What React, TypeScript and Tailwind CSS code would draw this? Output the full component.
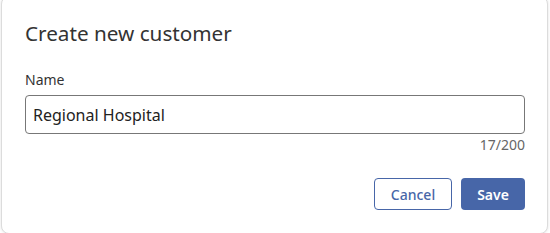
import { useState } from "react";

export default function App() {
  const [name, setName] = useState("Regional Hospital");

  return (
    <div className="w-[550px] h-[233px] bg-white overflow-hidden" style={{ fontFamily: '"Noto Sans", sans-serif' }}>
      <div className="ml-[1px] mr-[2px] -mt-[4px] h-[238px] rounded-lg bg-white border border-[#dcdcdc] shadow-[0_0_3px_rgba(0,0,0,0.12)] pl-[23px] pr-[22px] pt-[22px]">
        <h2 className="text-[20.7px] leading-[28px] text-[#333333]">Create new customer</h2>

        <div className="mt-[23px]">
          <label className="block text-[14px] leading-[19px] text-[#333333] mb-[6px]">Name</label>
          <input
            value={name}
            onChange={(e) => setName(e.target.value)}
            maxLength={200}
            className="w-full h-[39px] px-[7px] border border-[#777777] rounded-[4px] text-[16px] text-[#222222] outline-none"
          />
          <div className="text-right text-[14px] leading-[19px] text-[#666666] mt-[1px]">{name.length}/200</div>
        </div>

        <div className="flex justify-end gap-[9px] mt-[24px]">
          <button className="h-[32px] w-[78px] rounded-[4px] border border-[#4766a8] text-[14px] font-medium text-[#4766a8] bg-white">
            Cancel
          </button>
          <button className="h-[32px] w-[64px] rounded-[4px] bg-[#4766a8] text-[14px] font-semibold text-white">
            Save
          </button>
        </div>
      </div>
    </div>
  );
}
